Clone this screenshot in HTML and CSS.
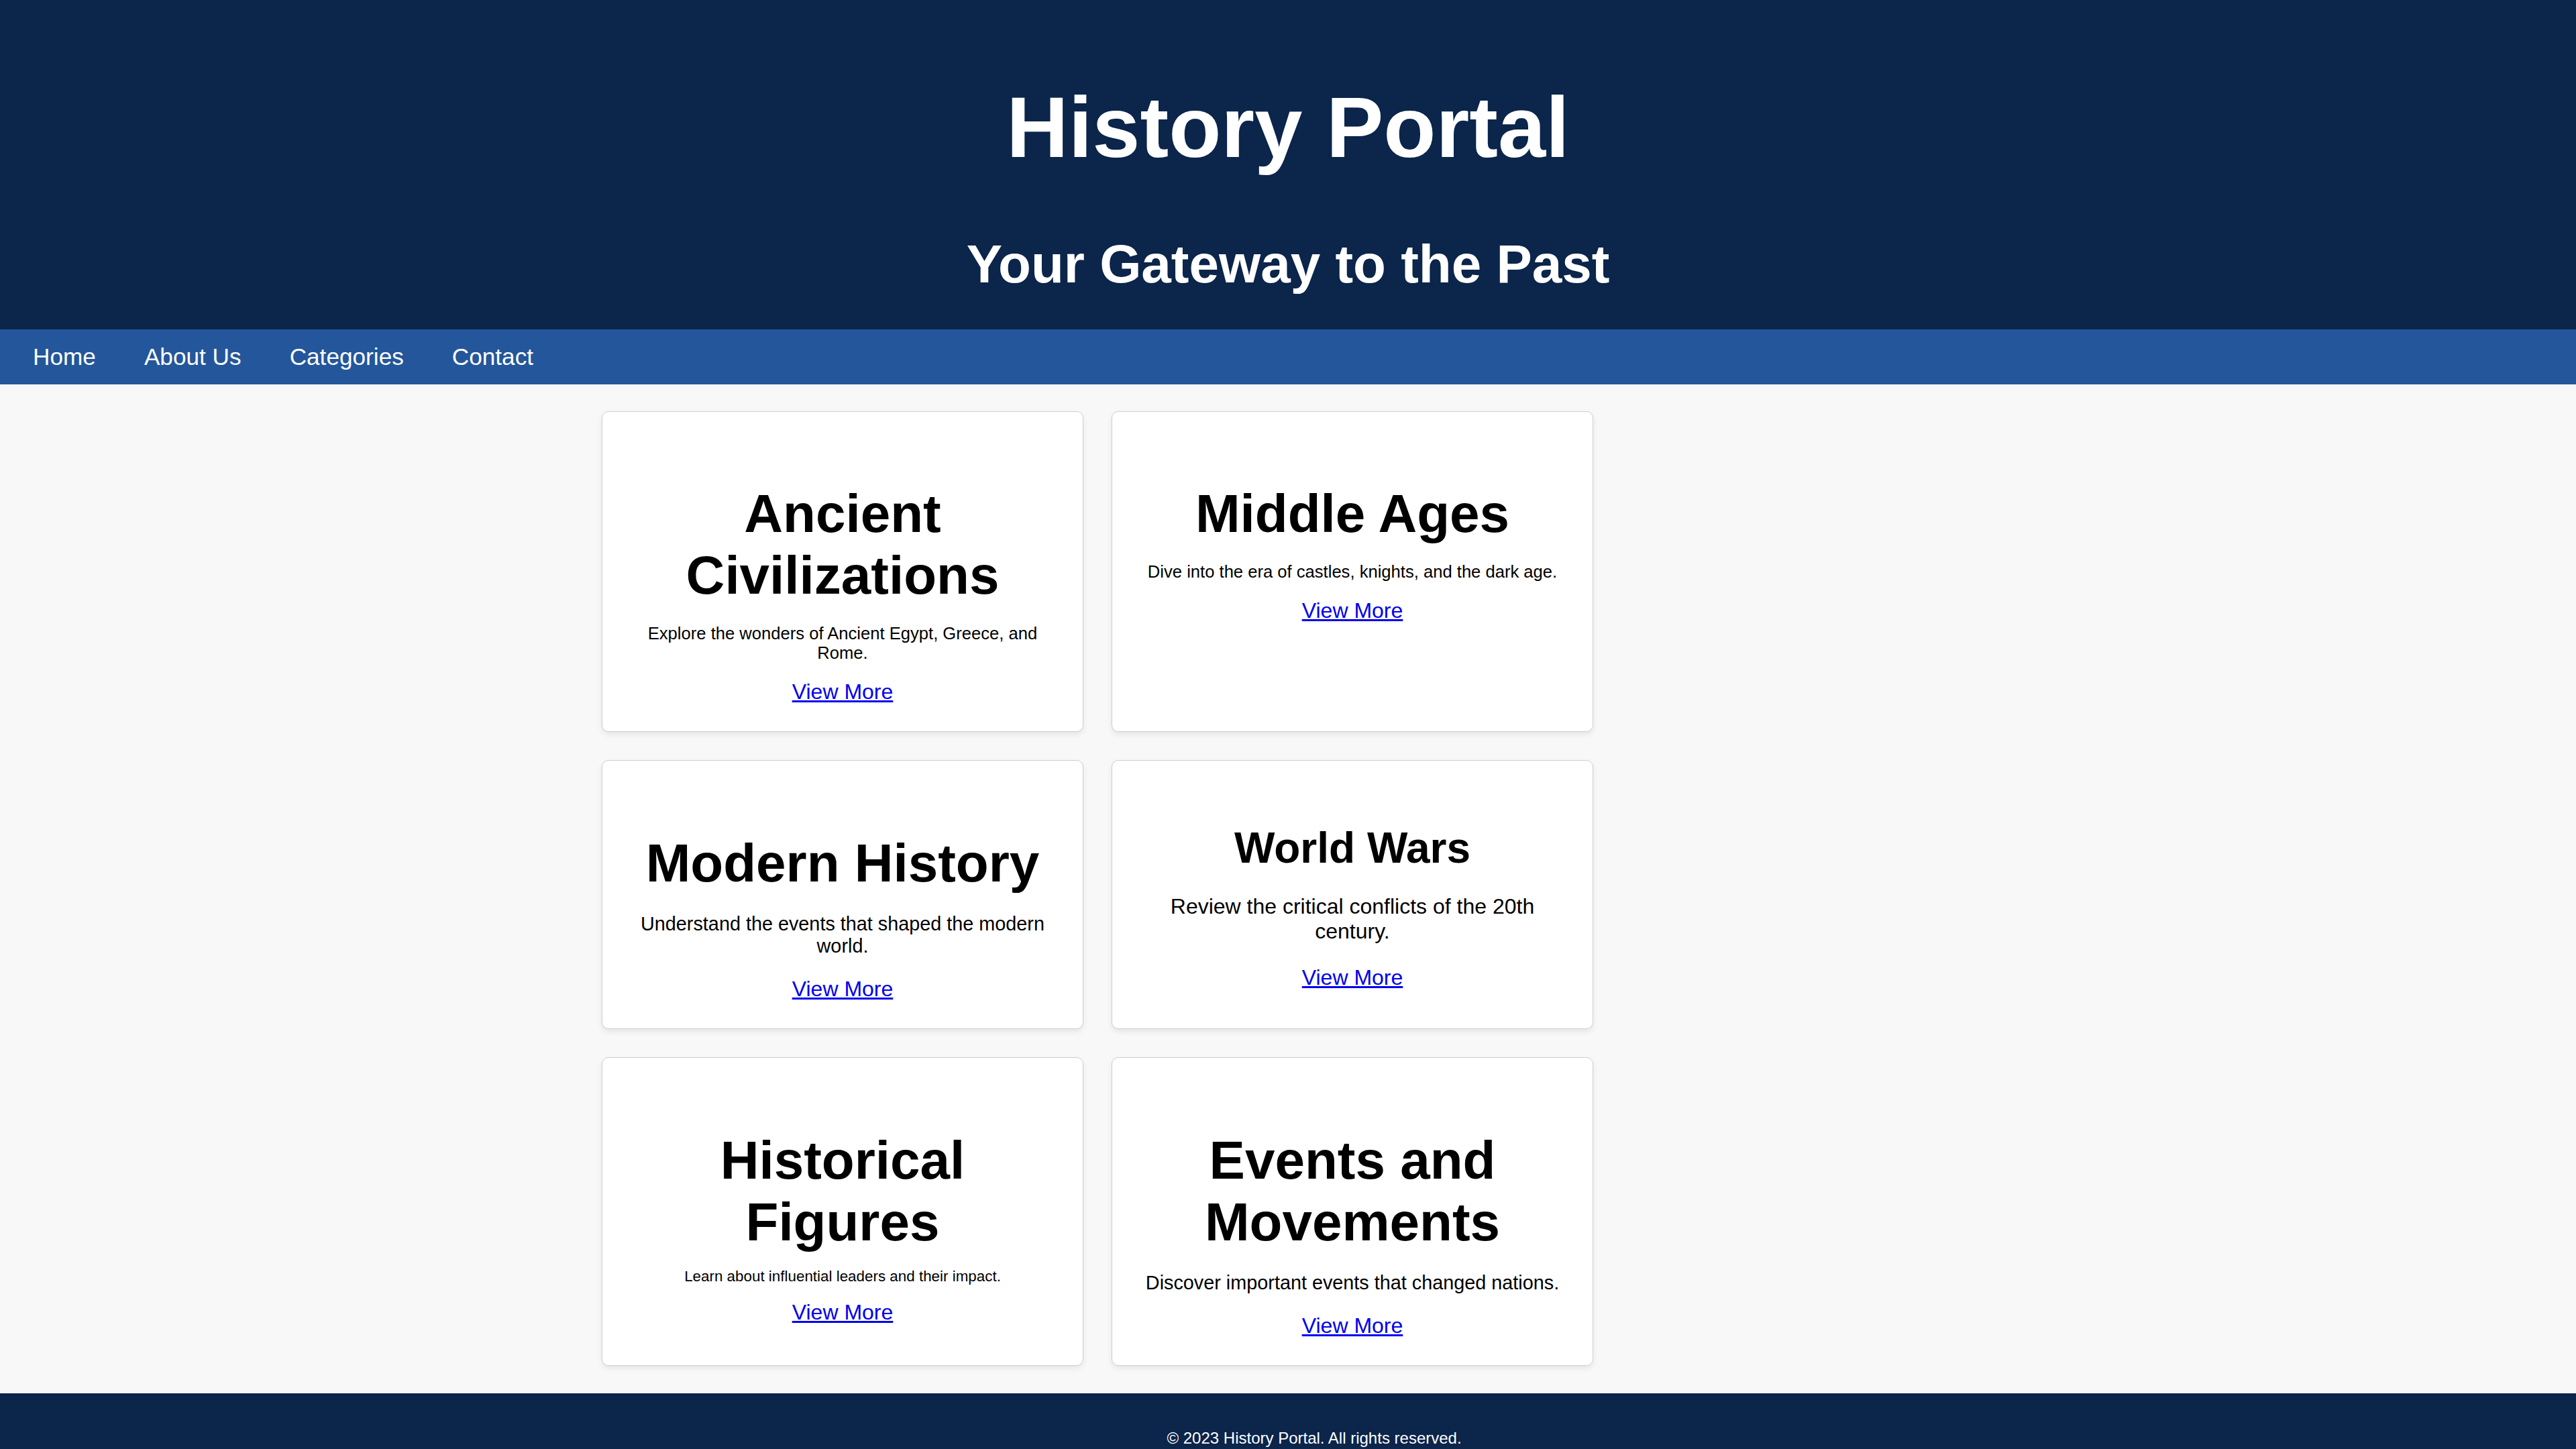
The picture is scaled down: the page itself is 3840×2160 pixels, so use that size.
FILE: index.html
```html
<!DOCTYPE html>
<html lang="en">
<head>
<meta charset="utf-8">
<title>History Portal</title>
<link rel="stylesheet" href="styles.css">
</head>
<body>
<header class="site-header">
  <h1 class="site-title">History Portal</h1>
  <h2 class="site-tagline">Your Gateway to the Past</h2>
</header>
<nav class="main-nav">
  <a href="#">Home</a>
  <a href="#">About Us</a>
  <a href="#">Categories</a>
  <a href="#">Contact</a>
</nav>
<main class="content">
  <section class="card">
    <h2>Ancient Civilizations</h2>
    <p class="text-s">Explore the wonders of Ancient Egypt, Greece, and Rome.</p>
    <a href="#">View More</a>
  </section>
  <section class="card">
    <h2>Middle Ages</h2>
    <p class="text-s">Dive into the era of castles, knights, and the dark age.</p>
    <a href="#">View More</a>
  </section>
  <section class="card">
    <h2>Modern History</h2>
    <p class="text-m">Understand the events that shaped the modern world.</p>
    <a href="#">View More</a>
  </section>
  <section class="card">
    <h2 class="title-small">World Wars</h2>
    <p class="text-l">Review the critical conflicts of the 20th century.</p>
    <a href="#">View More</a>
  </section>
  <section class="card">
    <h2>Historical Figures</h2>
    <p class="text-xs">Learn about influential leaders and their impact.</p>
    <a href="#">View More</a>
  </section>
  <section class="card">
    <h2>Events and Movements</h2>
    <p class="text-m">Discover important events that changed nations.</p>
    <a href="#">View More</a>
  </section>
</main>
<footer class="site-footer">
  <p>&copy; 2023 History Portal. All rights reserved.</p>
</footer>
</body>
</html>
```

FILE: styles.css
```css
* {
  box-sizing: border-box;
}

html {
  margin: 0;
  background: #0b254b;
}

body {
  margin: 0;
  font-family: "Liberation Sans", Arial, Helvetica, sans-serif;
  font-size: 32px;
  background: #f8f8f8;
  color: #000;
}

.site-header {
  background: #0b254b;
  color: #fff;
  text-align: center;
  padding: 30px 0 31px;
}

.site-title {
  font-size: 128px;
  font-weight: bold;
  margin: 86px 0 85px;
}

.site-tagline {
  font-size: 80px;
  font-weight: bold;
  margin: 0 0 20px;
}

.main-nav {
  background: #24569b;
  display: flex;
  gap: 72px;
  padding: 20.8px 49px;
}

.main-nav a {
  color: #fff;
  text-decoration: none;
  font-size: 35.2px;
}

.content {
  max-width: 2046px;
  margin: 0 auto;
  padding: 40px 0 41px;
  display: grid;
  grid-template-columns: repeat(auto-fill, 718px);
  gap: 42px;
}

.card {
  background: #fff;
  border: 1px solid #cfcfcf;
  border-radius: 10px;
  padding: 40px;
  text-align: center;
  box-shadow: 0 4px 8px rgba(0, 0, 0, 0.08);
}

.card h2 {
  font-size: 80px;
  font-weight: bold;
  margin: 0.83em 0 20px;
}

.card h2.title-small {
  font-size: 64px;
}

.card p {
  margin: 1em 0;
}

.text-xs {
  font-size: 22.4px;
}

.text-s {
  font-size: 25.6px;
}

.text-m {
  font-size: 28.8px;
}

.text-l {
  font-size: 32px;
}

.card a {
  color: #0000ee;
  font-size: 32px;
}

.site-footer {
  background: #0b254b;
  color: #fff;
  text-align: center;
  padding: 54px 0 0 78px;
}

.site-footer p {
  margin: 0;
  font-size: 24px;
  line-height: 26px;
}
```
